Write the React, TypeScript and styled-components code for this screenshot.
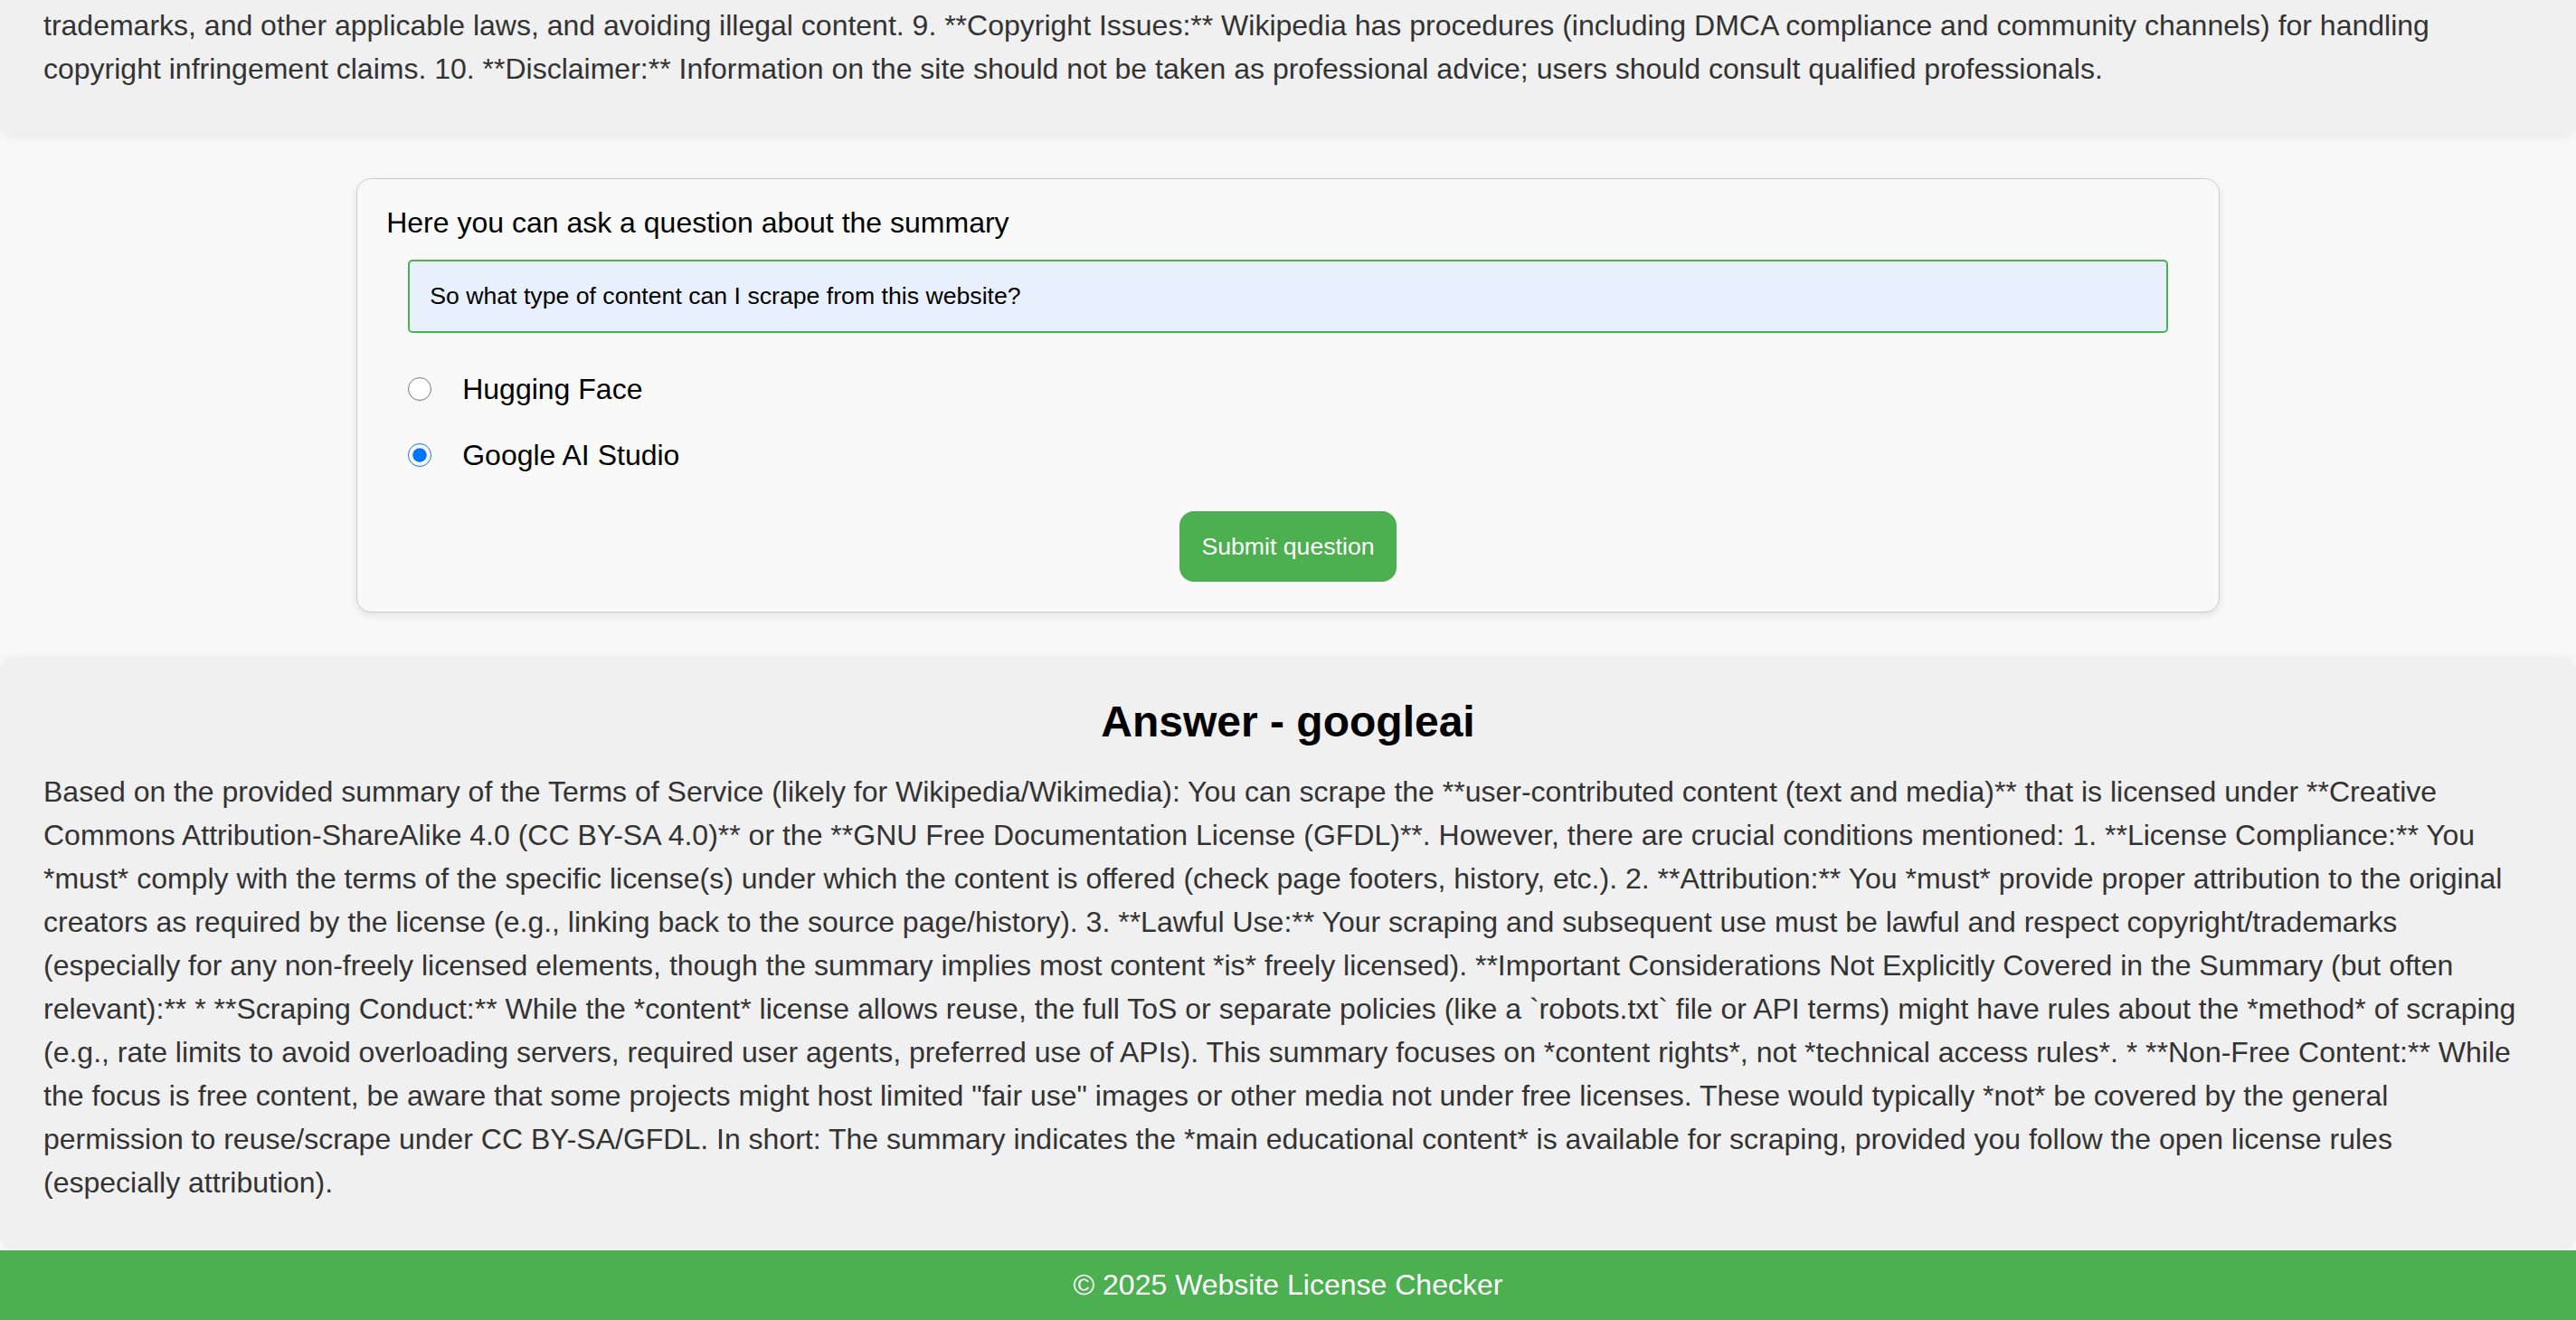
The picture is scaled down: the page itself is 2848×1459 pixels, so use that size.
import React from "react";
import styled, { createGlobalStyle } from "styled-components";

const GlobalStyle = createGlobalStyle`
  html, body {
    margin: 0;
    padding: 0;
    background: #f9f9f9;
    overflow: hidden;
  }
  body {
    font-family: "Liberation Sans", Arial, sans-serif;
    font-size: 32px;
    line-height: 48px;
    color: #333;
  }
  * { box-sizing: border-box; }
`;

const Page = styled.div`
  display: flex;
  flex-direction: column;
  min-height: 1459px;
`;

const SummaryCard = styled.section`
  background: #f0f0f0;
  border-radius: 0 0 16px 16px;
  box-shadow: 0 4px 14px rgba(0, 0, 0, 0.08);
  padding: 4px 48px 47px;
`;

const BodyText = styled.p`
  margin: 0;
  font-size: 32px;
  line-height: 48px;
  color: #333;
`;

const QuestionCard = styled.form`
  box-sizing: content-box;
  width: 70%;
  margin: 50px auto 0;
  padding: 24px 32px 33px;
  background: #f9f9f9;
  border: 1px solid #cccccc;
  border-radius: 16px;
  box-shadow: 0 3px 10px rgba(0, 0, 0, 0.1);
`;

const QuestionLabel = styled.label`
  display: block;
  font-size: 32px;
  line-height: 48px;
  color: #000;
  margin-bottom: 17px;
`;

const Indented = styled.div`
  padding: 0 24px;
`;

const QuestionInput = styled.input`
  display: block;
  width: 100%;
  height: 81px;
  padding: 0 22px;
  font-family: "Liberation Sans", Arial, sans-serif;
  font-size: 26.67px;
  color: #000;
  background: #e8f0fe;
  border: 2px solid #4caf50;
  border-radius: 5px;
  outline: none;
`;

const Options = styled.div`
  display: flex;
  flex-direction: column;
  gap: 25px;
  margin-top: 38px;
`;

const OptionRow = styled.label`
  display: flex;
  align-items: center;
  gap: 34px;
  height: 48px;
  font-size: 32px;
  color: #000;
`;

const Radio = styled.input`
  width: 26px;
  height: 26px;
  margin: 0;
  accent-color: #0075ff;
`;

const ButtonRow = styled.div`
  display: flex;
  justify-content: center;
  margin-top: 38px;
`;

const SubmitButton = styled.button`
  height: 78px;
  padding: 0 24px;
  font-family: "Liberation Sans", Arial, sans-serif;
  font-size: 26.67px;
  color: #fff;
  background: #4caf50;
  border: none;
  border-radius: 16px;
  cursor: pointer;
`;

const AnswerSection = styled.section`
  margin-top: 49px;
  background: #f0f0f0;
  border-radius: 16px;
  box-shadow: 0 -2px 12px rgba(0, 0, 0, 0.04);
  padding: 36px 48px 51px;
  flex: 1;
`;

const AnswerTitle = styled.h2`
  margin: 0 0 17px;
  text-align: center;
  font-size: 48px;
  line-height: 72px;
  font-weight: 700;
  color: #000;
`;

const Footer = styled.footer`
  background: #4caf50;
  color: #fff;
  text-align: center;
  font-size: 32px;
  line-height: 48px;
  padding: 14px 0 15px;
`;

const summaryTail =
  "trademarks, and other applicable laws, and avoiding illegal content. 9. **Copyright Issues:** Wikipedia has procedures (including DMCA compliance and community channels) for handling copyright infringement claims. 10. **Disclaimer:** Information on the site should not be taken as professional advice; users should consult qualified professionals.";

const answer =
  'Based on the provided summary of the Terms of Service (likely for Wikipedia/Wikimedia): You can scrape the **user-contributed content (text and media)** that is licensed under **Creative Commons Attribution-ShareAlike 4.0 (CC BY-SA 4.0)** or the **GNU Free Documentation License (GFDL)**. However, there are crucial conditions mentioned: 1. **License Compliance:** You *must* comply with the terms of the specific license(s) under which the content is offered (check page footers, history, etc.). 2. **Attribution:** You *must* provide proper attribution to the original creators as required by the license (e.g., linking back to the source page/history). 3. **Lawful Use:** Your scraping and subsequent use must be lawful and respect copyright/trademarks (especially for any non-freely licensed elements, though the summary implies most content *is* freely licensed). **Important Considerations Not Explicitly Covered in the Summary (but often relevant):** * **Scraping Conduct:** While the *content* license allows reuse, the full ToS or separate policies (like a `robots.txt` file or API terms) might have rules about the *method* of scraping (e.g., rate limits to avoid overloading servers, required user agents, preferred use of APIs). This summary focuses on *content rights*, not *technical access rules*. * **Non-Free Content:** While the focus is free content, be aware that some projects might host limited "fair use" images or other media not under free licenses. These would typically *not* be covered by the general permission to reuse/scrape under CC BY-SA/GFDL. In short: The summary indicates the *main educational content* is available for scraping, provided you follow the open license rules (especially attribution).';

export default function App() {
  return (
    <>
      <GlobalStyle />
      <Page>
        <SummaryCard>
          <BodyText>{summaryTail}</BodyText>
        </SummaryCard>

        <QuestionCard onSubmit={(e) => e.preventDefault()}>
          <QuestionLabel htmlFor="question">
            Here you can ask a question about the summary
          </QuestionLabel>
          <Indented>
            <QuestionInput
              id="question"
              type="text"
              defaultValue="So what type of content can I scrape from this website?"
            />
            <Options>
              <OptionRow>
                <Radio type="radio" name="provider" value="huggingface" />
                Hugging Face
              </OptionRow>
              <OptionRow>
                <Radio type="radio" name="provider" value="googleai" defaultChecked />
                Google AI Studio
              </OptionRow>
            </Options>
          </Indented>
          <ButtonRow>
            <SubmitButton type="submit">Submit question</SubmitButton>
          </ButtonRow>
        </QuestionCard>

        <AnswerSection>
          <AnswerTitle>Answer - googleai</AnswerTitle>
          <BodyText>{answer}</BodyText>
        </AnswerSection>

        <Footer>© 2025 Website License Checker</Footer>
      </Page>
    </>
  );
}
